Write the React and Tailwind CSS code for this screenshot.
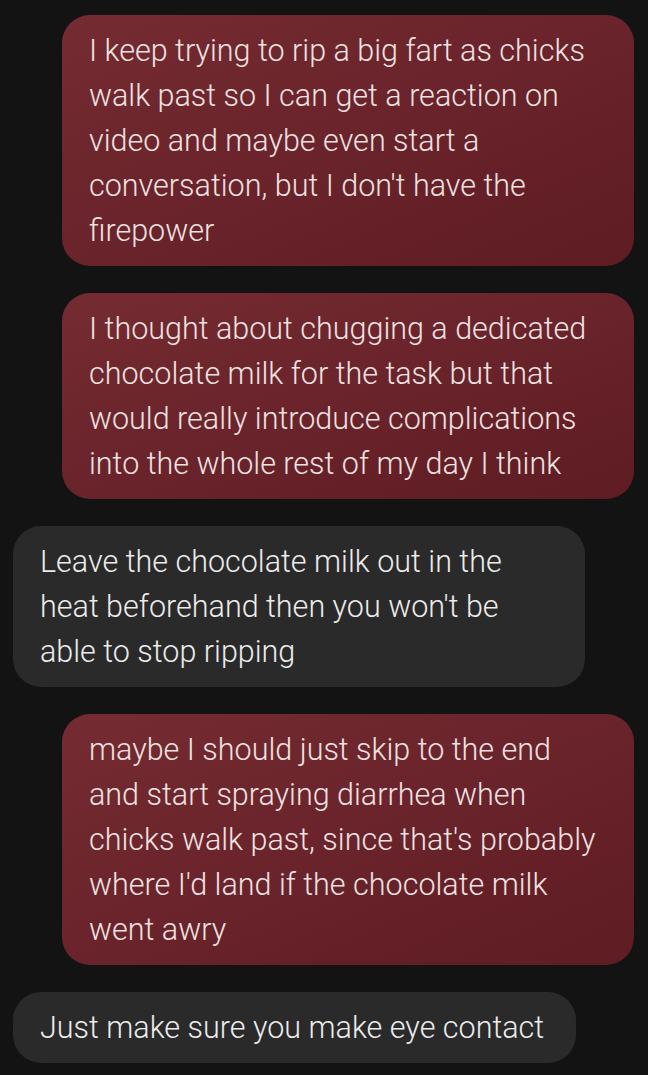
const messages = [
  {
    me: true,
    lines: [
      "I keep trying to rip a big fart as chicks",
      "walk past so I can get a reaction on",
      "video and maybe even start a",
      "conversation, but I don't have the",
      "firepower",
    ],
  },
  {
    me: true,
    lines: [
      "I thought about chugging a dedicated",
      "chocolate milk for the task but that",
      "would really introduce complications",
      "into the whole rest of my day I think",
    ],
  },
  {
    me: false,
    lines: [
      "Leave the chocolate milk out in the",
      "heat beforehand then you won't be",
      "able to stop ripping",
    ],
  },
  {
    me: true,
    lines: [
      "maybe I should just skip to the end",
      "and start spraying diarrhea when",
      "chicks walk past, since that's probably",
      "where I'd land if the chocolate milk",
      "went awry",
    ],
  },
  { me: false, lines: ["Just make sure you make eye contact"] },
];

function Bubble({ me, lines }) {
  const wide = lines.length > 1;
  return (
    <div className={`flex ${me ? "justify-end" : "justify-start"}`}>
      <div
        className={`${wide ? "w-[572px]" : "w-fit"} rounded-[28px] pl-[27px] pr-[32px] py-[13px] text-[30.5px] font-light leading-[45px] whitespace-nowrap ${
          me
            ? "bg-gradient-to-br from-[#752b32] to-[#5f1c23] text-[#efe2e2]"
            : "bg-[#2a2a2a] text-[#ececec]"
        }`}
      >
        {lines.map((l, i) => (
          <div key={i}>{l}</div>
        ))}
      </div>
    </div>
  );
}

export default function App() {
  return (
    <div
      className="min-h-screen bg-[#131313] pl-[13px] pr-[14px] pt-[15px] pb-[13px] flex flex-col gap-[27px]"
      style={{ fontFamily: "Roboto, 'Noto Sans', sans-serif" }}
    >
      {messages.map((m, i) => (
        <Bubble key={i} {...m} />
      ))}
    </div>
  );
}
